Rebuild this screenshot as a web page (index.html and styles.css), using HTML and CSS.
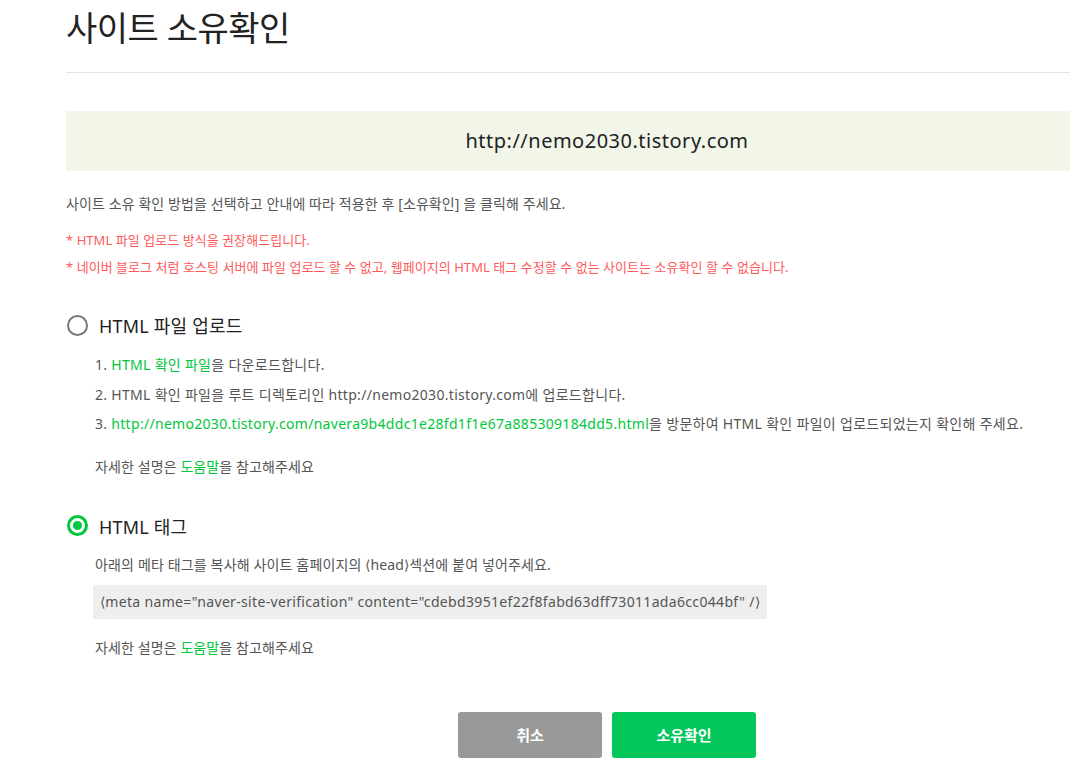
FILE: index.html
```html
<!DOCTYPE html>
<html lang="ko">

<head>
    <meta charset="UTF-8">
    <meta name="viewport" content="width=device-width, initial-scale=1.0">
    <title>사이트 소유확인</title>
    <link rel="stylesheet" href="styles.css">
</head>

<body>
    <div class="wrap">
        <h2 class="title">사이트 소유확인</h2>

        <div class="site-url">http://nemo2030.tistory.com</div>

        <p class="guide">사이트 소유 확인 방법을 선택하고 안내에 따라 적용한 후 [소유확인] 을 클릭해 주세요.</p>
        <p class="warn">* HTML 파일 업로드 방식을 권장해드립니다.</p>
        <p class="warn">* 네이버 블로그 처럼 호스팅 서버에 파일 업로드 할 수 없고, 웹페이지의 HTML 태그 수정할 수 없는 사이트는 소유확인 할 수 없습니다.</p>

        <div class="method">
            <label class="radio">
                <span class="radio-mark"></span>
                <span class="radio-text">HTML 파일 업로드</span>
            </label>
            <ol class="steps">
                <li>1. <a href="#">HTML 확인 파일</a>을 다운로드합니다.</li>
                <li>2. HTML 확인 파일을 루트 디렉토리인 http://nemo2030.tistory.com에 업로드합니다.</li>
                <li>3. <a href="#">http://nemo2030.tistory.com/navera9b4ddc1e28fd1f1e67a885309184dd5.html</a>을 방문하여 HTML 확인 파일이 업로드되었는지 확인해 주세요.</li>
            </ol>
            <p class="help">자세한 설명은 <a href="#">도움말</a>을 참고해주세요</p>
        </div>

        <div class="method">
            <label class="radio checked">
                <span class="radio-mark"></span>
                <span class="radio-text">HTML 태그</span>
            </label>
            <p class="desc">아래의 메타 태그를 복사해 사이트 홈페이지의 &lang;head&rang;섹션에 붙여 넣어주세요.</p>
            <div class="code">&lang;meta name="naver-site-verification" content="cdebd3951ef22f8fabd63dff73011ada6cc044bf" /&rang;</div>
            <p class="help">자세한 설명은 <a href="#">도움말</a>을 참고해주세요</p>
        </div>

        <div class="buttons">
            <a href="#" class="btn btn-cancel">취소</a>
            <a href="#" class="btn btn-ok">소유확인</a>
        </div>
    </div>
</body>

</html>
```

FILE: styles.css
```css
html,
body {
    overflow: hidden;
}

body {
    margin: 0;
    font-family: "Noto Sans", "Noto Sans CJK KR", sans-serif;
    color: #555;
    background-color: #fff;
}

a {
    color: #00c73c;
    text-decoration: none;
}

.wrap {
    width: 1082px;
    margin-left: 66px;
}

.title {
    margin: 0;
    height: 72px;
    border-bottom: 1px solid #e5e5e5;
    font-size: 34px;
    font-weight: normal;
    line-height: 56px;
    color: #222;
    letter-spacing: -0.5px;
}

.site-url {
    margin-top: 38px;
    height: 60px;
    line-height: 60px;
    background-color: #f1f6e9;
    text-align: center;
    font-size: 20px;
    letter-spacing: 0.5px;
    color: #222;
}

.guide {
    margin: 22px 0 12px;
    font-size: 14px;
    line-height: 22px;
    letter-spacing: 0.1px;
}

.warn {
    margin: 0;
    font-size: 13px;
    line-height: 27px;
    color: #ff5a5a;
    letter-spacing: 0.05px;
}

.method {
    margin-top: 24px;
}

.method+.method {
    margin-top: 25px;
}

.radio {
    display: flex;
    align-items: center;
    gap: 11px;
    height: 40px;
    cursor: pointer;
}

.radio-mark {
    margin-left: 1px;
    width: 17px;
    height: 17px;
    border: 2px solid #777;
    border-radius: 50%;
    display: flex;
    align-items: center;
    justify-content: center;
}

.radio.checked .radio-mark {
    border: 3px solid #00c73c;
    width: 15px;
    height: 15px;
}

.radio.checked .radio-mark::after {
    content: "";
    width: 9px;
    height: 9px;
    border-radius: 50%;
    background-color: #00c73c;
}

.radio-text {
    font-size: 18px;
    color: #222;
    letter-spacing: 0.2px;
}

.steps {
    list-style: none;
    margin: 5px 0 0;
    padding: 0 0 0 29px;
}

.steps li {
    font-size: 14px;
    line-height: 29.5px;
    letter-spacing: 0.3px;
}

.help {
    margin: 13px 0 0 29px;
    font-size: 14px;
    line-height: 29px;
    letter-spacing: 0.1px;
}

.desc {
    margin: 4px 0 0 29px;
    font-size: 14px;
    line-height: 29px;
    letter-spacing: 0.15px;
}

.code {
    display: inline-block;
    margin: 6px 0 0 27px;
    padding: 0 7px;
    height: 34px;
    line-height: 34px;
    background-color: #eee;
    font-size: 14px;
    letter-spacing: 0.33px;
}

.method .code+.help {
    margin-top: 14px;
}

.buttons {
    display: flex;
    gap: 10px;
    margin: 50px 0 0 392px;
}

.btn {
    width: 144px;
    height: 46px;
    line-height: 46px;
    border-radius: 3px;
    text-align: center;
    color: #fff;
    font-size: 15px;
    font-weight: bold;
}

.btn-cancel {
    background-color: #999;
}

.btn-ok {
    background-color: #03c75a;
}
```
